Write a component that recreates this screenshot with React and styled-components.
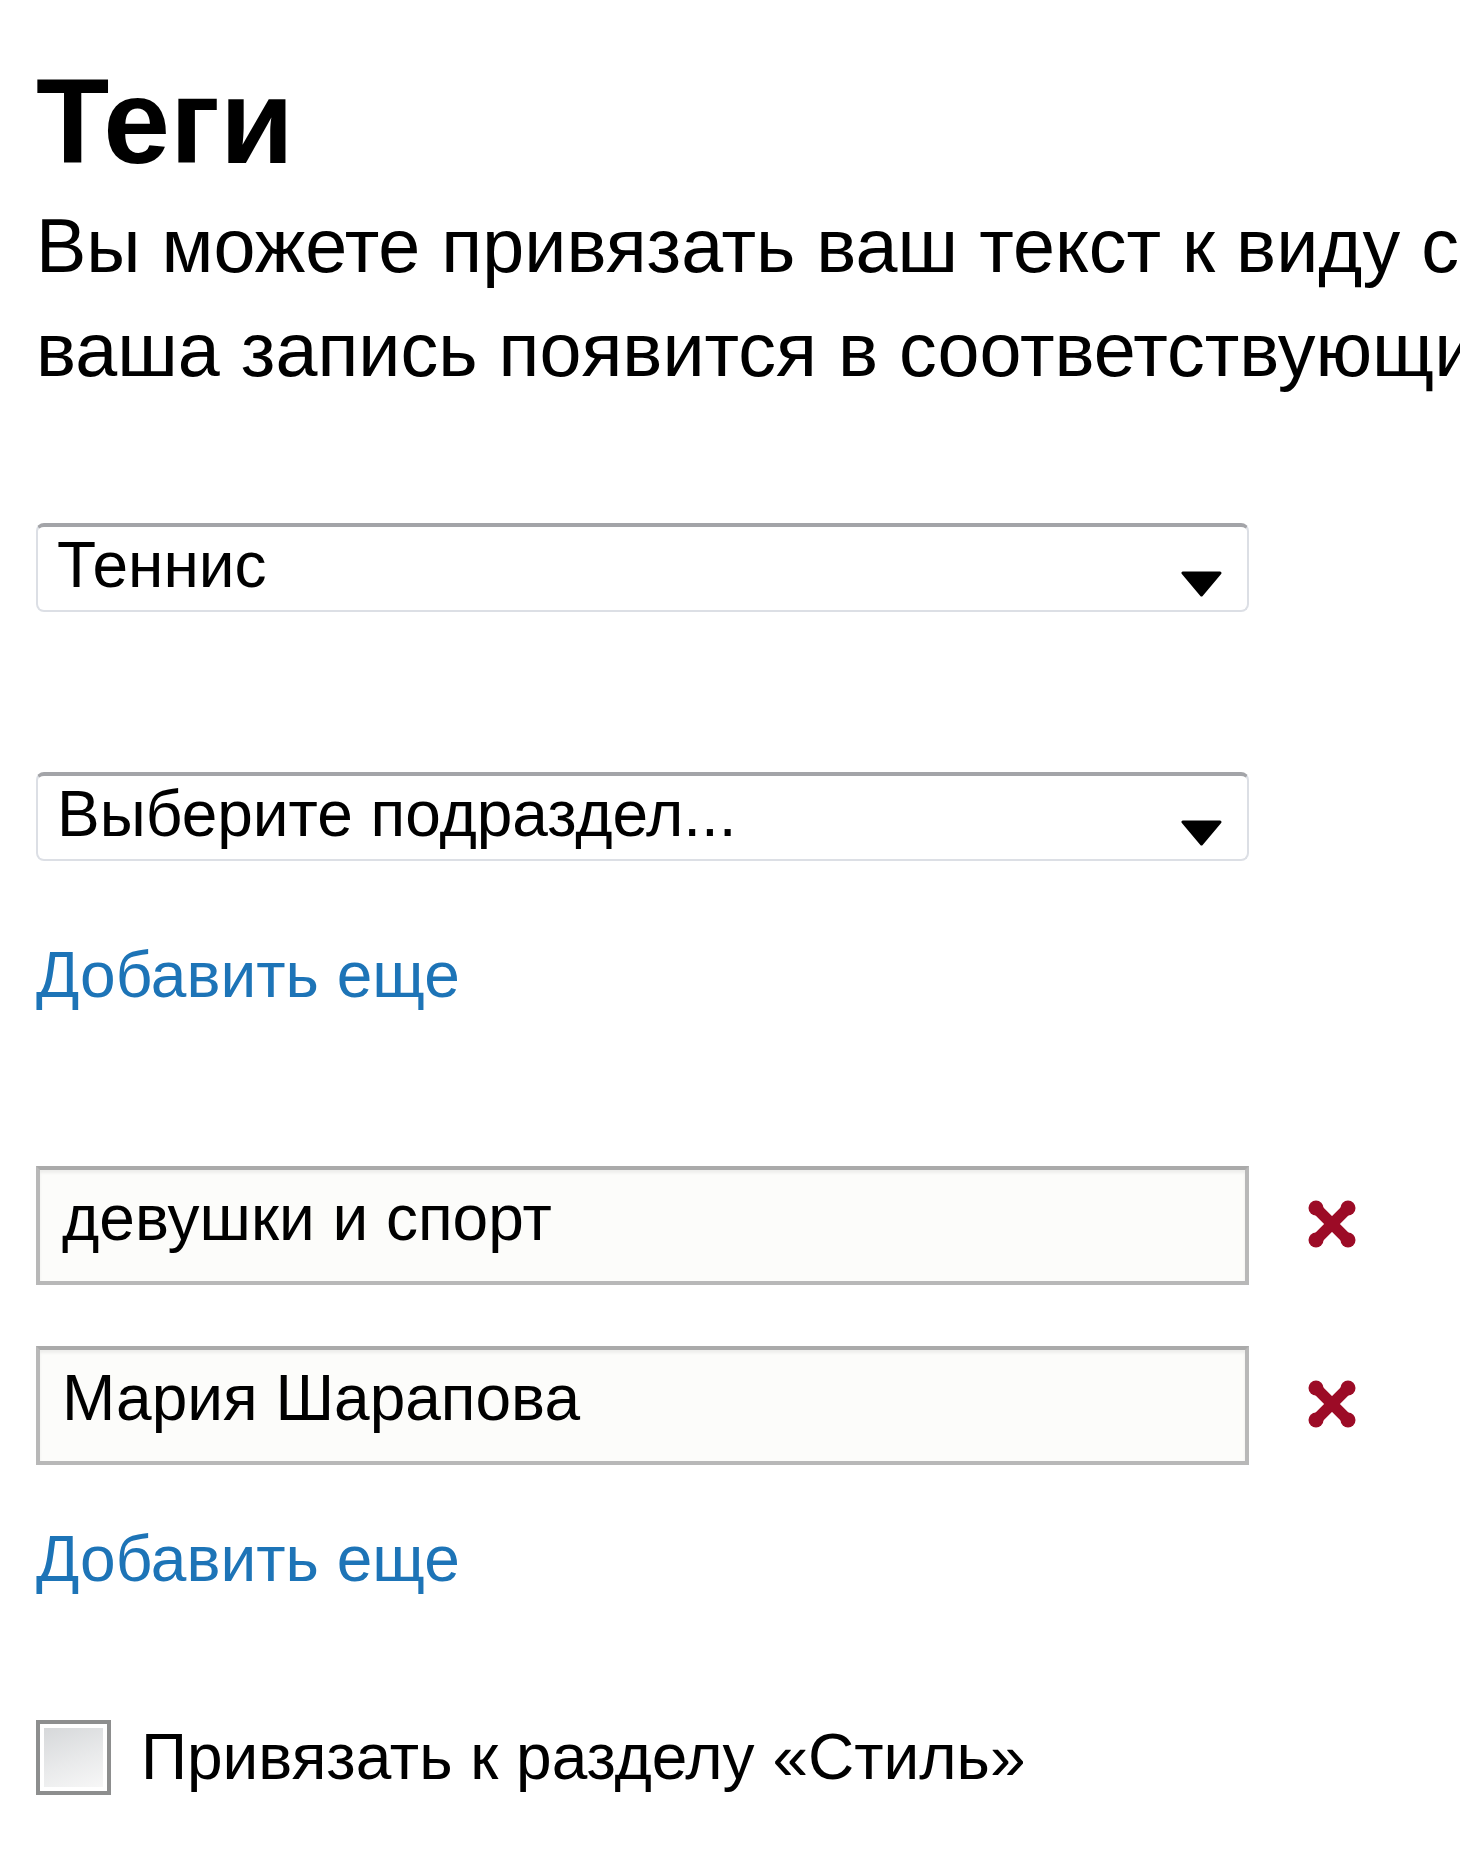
import React from 'react';
import styled, { createGlobalStyle } from 'styled-components';

const GlobalStyle = createGlobalStyle`
  html, body {
    margin: 0;
    padding: 0;
    background: #ffffff;
    overflow: hidden;
  }
  body {
    font-family: "Liberation Sans", Arial, sans-serif;
    color: #000;
  }
`;

/**
 * Page wrapper
 */
const Page = styled.div`
  width: 1460px;
  height: 1854px;
  padding: 61px 0 0 36px;
  box-sizing: border-box;
  overflow: hidden;
`;

const Title = styled.h1`
  margin: 0;
  font-size: 120px;
  line-height: 120px;
  font-weight: 700;
  color: #000;
`;

const Intro = styled.p`
  margin: 13px 0 0;
  font-size: 75.5px;
  line-height: 104px;
  white-space: nowrap;
  color: #000;
`;

/**
 * Fake select box
 */
const SelectBox = styled.div`
  display: flex;
  align-items: flex-start;
  width: 1213px;
  height: 89px;
  margin-top: ${props => props.$top}px;
  box-sizing: border-box;
  padding: 6px 25px 0 19px;
  border: 2px solid #dcdfe5;
  border-top: 4px solid #a3a4a8;
  border-radius: 8px;
  background: #fff;
  font-size: 64px;
  line-height: 64px;
  color: #000;
`;

const SelectText = styled.span`
  flex: 1;
  white-space: nowrap;
`;

const Arrow = styled.svg`
  flex: none;
  margin-top: 38px;
  width: 41px;
  height: 26px;
`;

const AddLink = styled.a`
  display: block;
  margin-top: ${props => props.$top}px;
  font-size: 64px;
  line-height: 80px;
  color: #1d74b7;
  text-decoration: none;
  cursor: pointer;
`;

const TagRow = styled.div`
  display: flex;
  align-items: center;
  gap: 58px;
  margin-top: ${props => props.$top}px;
`;

const TagInput = styled.div`
  width: 1213px;
  height: 119px;
  box-sizing: border-box;
  padding: 8px 0 0 22px;
  border: 4px solid #b8b8b8;
  border-top-color: #aaaaaa;
  background: #fcfcfa;
  box-shadow: inset 0 3px 3px rgba(0, 0, 0, 0.06);
  font-size: 64px;
  line-height: 80px;
  color: #000;
  white-space: nowrap;
`;

const RemoveIcon = styled.svg`
  width: 50px;
  height: 50px;
  flex: none;
  margin-top: -4px;
  cursor: pointer;
`;

const CheckRow = styled.label`
  display: flex;
  align-items: center;
  gap: 30px;
  margin-top: 121px;
`;

const CheckBox = styled.span`
  display: block;
  width: 75px;
  height: 75px;
  box-sizing: border-box;
  border: 4px solid #8d8e8e;
  padding: 4px;
  background: #fff;

  &::after {
    content: "";
    display: block;
    width: 100%;
    height: 100%;
    background: linear-gradient(160deg, #d6d8da 0%, #e9eaeb 55%, #f7f7f7 100%);
  }
`;

const CheckLabel = styled.span`
  font-size: 64px;
  line-height: 75px;
  color: #000;
  white-space: nowrap;
`;

const DownArrow = () => (
  <Arrow viewBox="0 0 41 26">
    <polygon points="2,2 39,2 20.5,24" fill="#000" stroke="#000" strokeWidth="3" strokeLinejoin="round" />
  </Arrow>
);

const Cross = () => (
  <RemoveIcon viewBox="0 0 50 50">
    <g stroke="#9c0b26" strokeWidth="11" strokeLinecap="round">
      <line x1="9" y1="9" x2="41" y2="41" />
      <line x1="41" y1="9" x2="9" y2="41" />
    </g>
    <g fill="#9c0b26">
      <circle cx="9" cy="9" r="7.5" />
      <circle cx="41" cy="9" r="7.5" />
      <circle cx="9" cy="41" r="7.5" />
      <circle cx="41" cy="41" r="7.5" />
    </g>
  </RemoveIcon>
);

const tags = ['девушки и спорт', 'Мария Шарапова'];

export default function App() {
  return (
    <Page>
      <GlobalStyle />
      <Title>Теги</Title>
      <Intro>
        Вы можете привязать ваш текст к виду спорта, и тогда
        <br />
        ваша запись появится в соответствующих разделах сайта.
      </Intro>

      <SelectBox $top={121}>
        <SelectText>Теннис</SelectText>
        <DownArrow />
      </SelectBox>

      <SelectBox $top={160}>
        <SelectText>Выберите подраздел...</SelectText>
        <DownArrow />
      </SelectBox>

      <AddLink $top={74}>Добавить еще</AddLink>

      {tags.map((tag, i) => (
        <TagRow key={tag} $top={i === 0 ? 151 : 61}>
          <TagInput>{tag}</TagInput>
          <Cross />
        </TagRow>
      ))}

      <AddLink $top={54}>Добавить еще</AddLink>

      <CheckRow>
        <CheckBox />
        <CheckLabel>Привязать к разделу «Стиль»</CheckLabel>
      </CheckRow>
    </Page>
  );
}
